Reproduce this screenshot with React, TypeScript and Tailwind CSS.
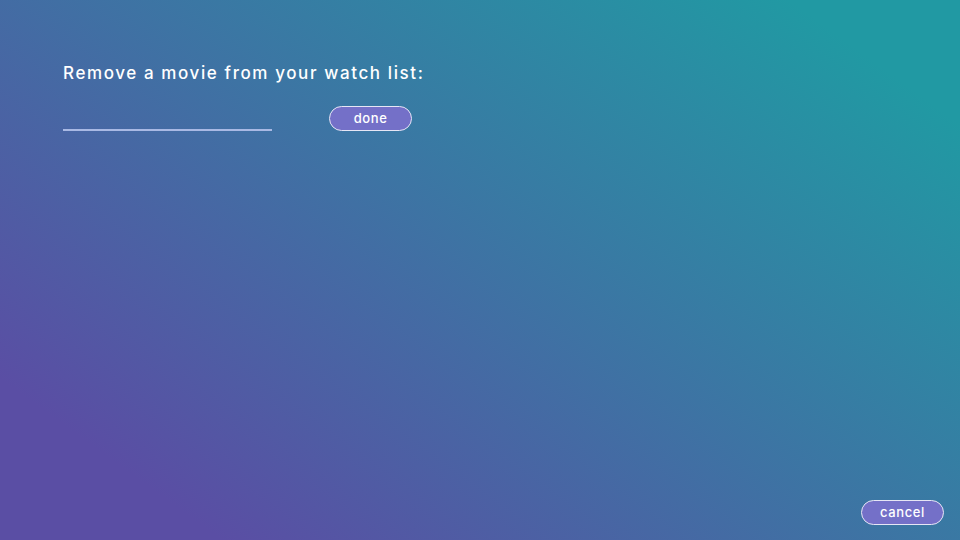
export default function App() {
  return (
    <div
      className="relative w-[960px] h-[540px] overflow-hidden flex flex-col bg-[linear-gradient(36deg,#5a4ea4_13%,#2199a3_90%)] text-white"
      style={{ fontFamily: '"Inter", "Open Sans", sans-serif' }}
    >
      <div className="pl-[63px] pt-[62px] flex flex-col">
        <div className="text-[17px] font-medium leading-[22px] tracking-[1.6px]">Remove a movie from your watch list:</div>
        <div className="flex items-end mt-[22px]">
          <div className="w-[209px] h-[2px] bg-[#a9b9e4] mb-[-1px]" />
          <button className="ml-[57px] w-[83px] h-[25px] rounded-full bg-[#7470c8] border border-[#e6e6f5] text-[13px] font-medium leading-none tracking-[0.6px] mb-[-1px]">
            done
          </button>
        </div>
      </div>
      <div className="flex-1" />
      <div className="flex justify-end pr-[16px] pb-[15px]">
        <button className="w-[83px] h-[25px] rounded-full bg-[#7470c8] border border-[#e6e6f5] text-[13px] font-medium leading-none tracking-[0.6px]">
          cancel
        </button>
      </div>
    </div>
  );
}
